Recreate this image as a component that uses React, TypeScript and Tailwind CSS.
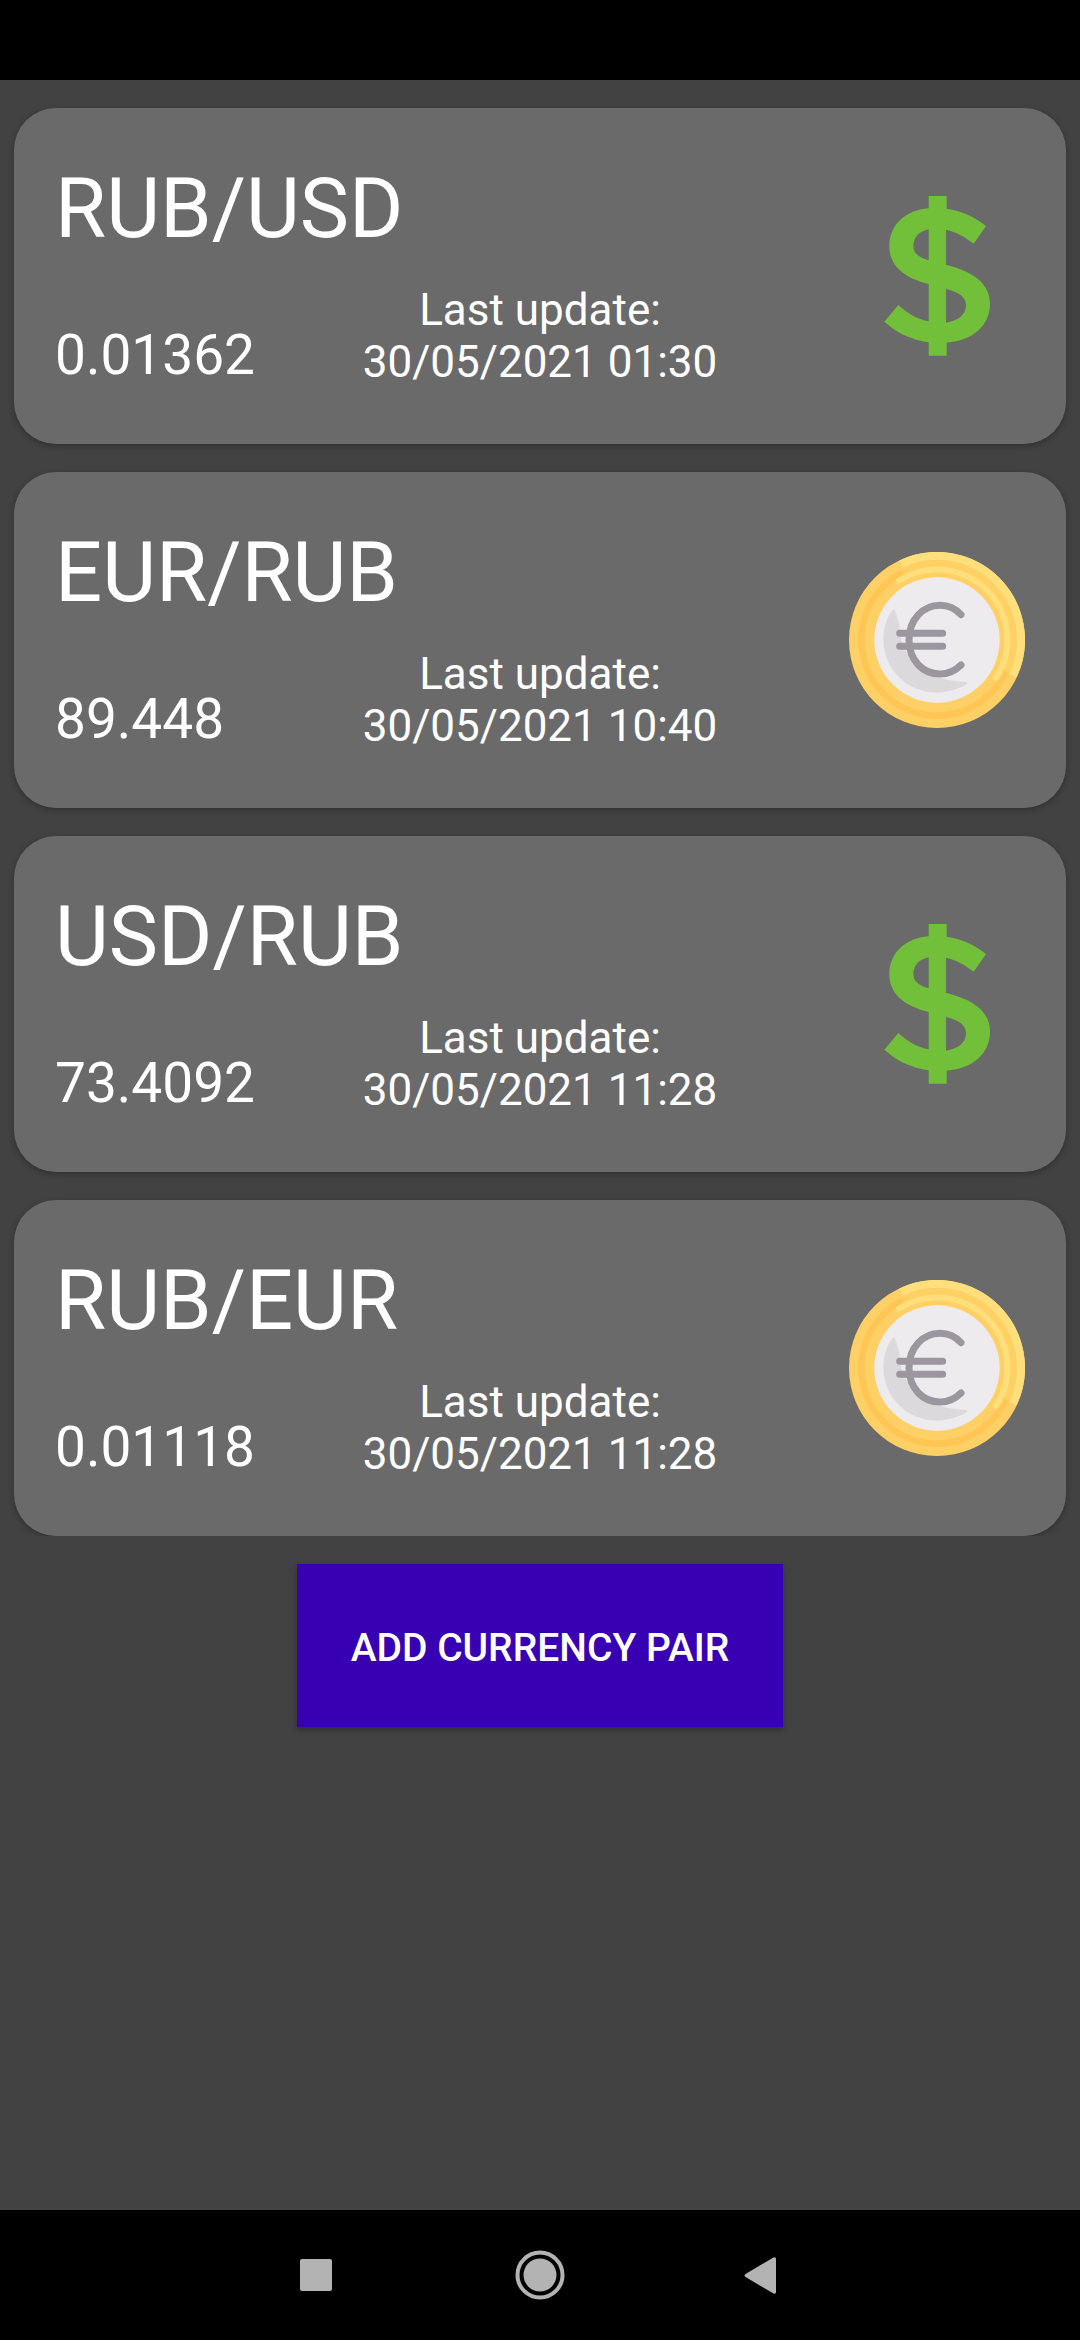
type CurrencyPair = {
  name: string;
  rate: string;
  updated: string;
  icon: "dollar" | "euro";
};

const pairs: CurrencyPair[] = [
  { name: "RUB/USD", rate: "0.01362", updated: "30/05/2021 01:30", icon: "dollar" },
  { name: "EUR/RUB", rate: "89.448", updated: "30/05/2021 10:40", icon: "euro" },
  { name: "USD/RUB", rate: "73.4092", updated: "30/05/2021 11:28", icon: "dollar" },
  { name: "RUB/EUR", rate: "0.01118", updated: "30/05/2021 11:28", icon: "euro" },
];

function DollarIcon() {
  return (
    <svg viewBox="87 54 528 528" className="size-44" aria-hidden="true">
      <path
        fill="#72bf3a"
        fillRule="evenodd"
        d="M326 78H380V116C424 122 464 140 498 168L461 221C434 200 408 186 378 179V284C466 306 510 344 510 400C510 468 458 512 380 518V557H326V517C276 510 230 489 193 455L235 405C262 430 292 448 326 454V342C246 322 208 284 208 228C208 166 256 120 326 115ZM326 178C298 184 280 202 280 228C280 248 294 262 326 271ZM378 357V458C416 452 438 434 438 406C438 382 418 366 378 357Z"
      />
    </svg>
  );
}

function EuroIcon() {
  return (
    <svg viewBox="57 66 528 528" className="size-44" aria-hidden="true" fill="none">
      <circle cx="321" cy="330" r="264" fill="#ffd065" />
      <circle cx="321" cy="330" r="227" stroke="#ffc656" strokeWidth="20" />
      <path d="M219 127A227 227 0 0 1 528 424" stroke="#ffd064" strokeWidth="20" />
      <path d="M213 102A252 252 0 0 1 549 437" stroke="#ffdf7b" strokeWidth="24" />
      <path
        d="M207 152A211 211 0 0 1 499 443"
        stroke="#ffdf7b"
        strokeWidth="18"
        strokeLinecap="round"
      />
      <circle cx="321" cy="330" r="188" fill="#edebee" />
      <path
        fill="#dbd9dc"
        d="M190 238C196 238 202 262 208 288C212 388 282 452 410 456C416 462 406 466 396 470C278 524 162 444 160 330C160 292 172 258 190 238Z"
      />
      <g stroke="#9c969e" strokeWidth="21" strokeLinecap="round">
        <path d="M393 254C376 236 354 226 330 226C278 226 237 270 237 330C237 390 278 432 330 432C354 432 376 422 393 405" />
        <path d="M209 310H338M209 349H338" />
      </g>
    </svg>
  );
}

function PairCard({ pair }: { pair: CurrencyPair }) {
  return (
    <li className="grid grid-cols-[1fr_auto_1fr] gap-y-4 rounded-[42px] bg-[#6a6a6a] px-[41px] py-[42px] shadow-[0_2px_6px_rgba(0,0,0,0.28)]">
      <h2 className="col-span-2 text-[83px] leading-[118px]">{pair.name}</h2>
      <div className="col-start-3 row-span-2 row-start-1 self-center justify-self-end">
        {pair.icon === "dollar" ? <DollarIcon /> : <EuroIcon />}
      </div>
      <p className="self-end pb-[14px] text-[55px] leading-[66px]">{pair.rate}</p>
      <p className="pb-[14px] text-center text-[44px] leading-[52px]">
        Last update:
        <br />
        {pair.updated}
      </p>
    </li>
  );
}

function NavigationBar() {
  return (
    <nav className="flex h-[130px] items-center justify-center gap-[142px] bg-black">
      <button type="button" aria-label="Recent apps">
        <svg viewBox="0 0 80 80" className="size-20" fill="#b3b3b3">
          <rect x="22" y="24" width="32" height="32" rx="2" />
        </svg>
      </button>
      <button type="button" aria-label="Home">
        <svg viewBox="0 0 80 80" className="size-20" fill="#b3b3b3">
          <circle cx="40" cy="40" r="16.5" />
          <circle cx="40" cy="40" r="22.5" fill="none" stroke="#b3b3b3" strokeWidth="4" />
        </svg>
      </button>
      <button type="button" aria-label="Back">
        <svg viewBox="0 0 80 80" className="size-20" fill="#b3b3b3">
          <path d="M23.5 39L51.5 22.5Q54 21.5 54 24V57Q54 59.5 51.5 58.500L23.5 42Q21.500 40.500 23.500 39Z" />
        </svg>
      </button>
    </nav>
  );
}

export default function App() {
  return (
    <div className="flex min-h-screen flex-col bg-[#424242] font-[Roboto,sans-serif] text-white">
      <header className="h-20 bg-black" />
      <main className="flex flex-1 flex-col items-center">
        <ul className="flex w-full flex-col gap-7 overflow-hidden px-[14px] pt-7">
          {pairs.map((pair) => (
            <PairCard key={pair.name} pair={pair} />
          ))}
        </ul>
        <button
          type="button"
          className="mt-7 bg-[#3700b3] px-[54px] pt-[61px] pb-[55px] text-[39px] leading-[47px] font-medium uppercase shadow-[0_3px_6px_rgba(0,0,0,0.3)]"
        >
          Add currency pair
        </button>
      </main>
      <NavigationBar />
    </div>
  );
}
